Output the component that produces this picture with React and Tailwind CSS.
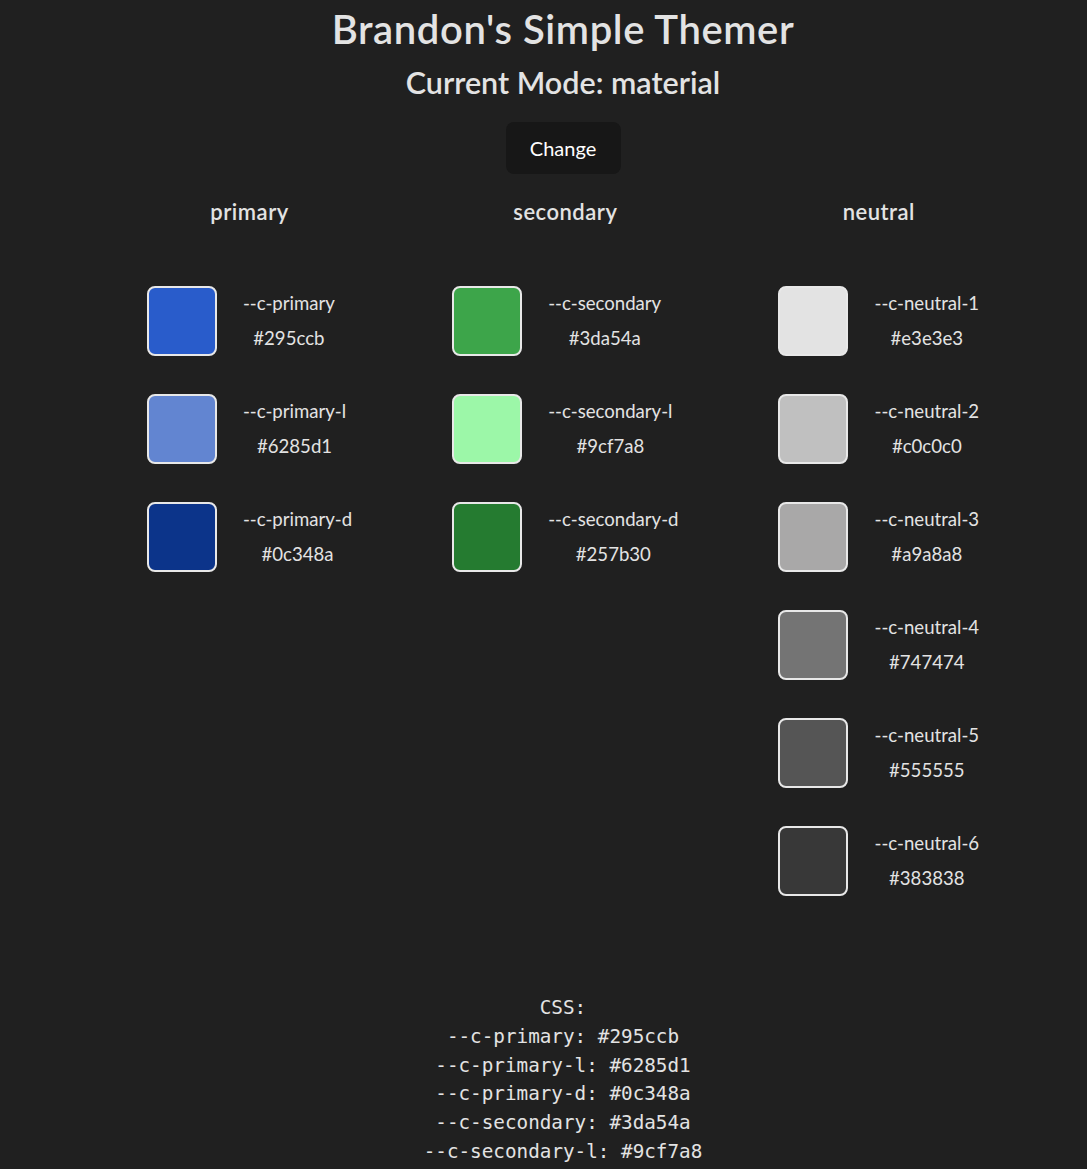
import { useState } from 'react';

const palettes = {
  material: {
    primary: [
      ['--c-primary', '#295ccb'],
      ['--c-primary-l', '#6285d1'],
      ['--c-primary-d', '#0c348a'],
    ],
    secondary: [
      ['--c-secondary', '#3da54a'],
      ['--c-secondary-l', '#9cf7a8'],
      ['--c-secondary-d', '#257b30'],
    ],
    neutral: [
      ['--c-neutral-1', '#e3e3e3'],
      ['--c-neutral-2', '#c0c0c0'],
      ['--c-neutral-3', '#a9a8a8'],
      ['--c-neutral-4', '#747474'],
      ['--c-neutral-5', '#555555'],
      ['--c-neutral-6', '#383838'],
    ],
  },
};

const Swatch = ({ name, hex }) => (
  <div className="flex items-center gap-[26px]">
    <div
      className="w-[70px] h-[70px] rounded-lg border-2 border-[#e8e8e8] shrink-0"
      style={{ backgroundColor: hex }}
    />
    <div className="flex flex-col items-center text-[18.6px] leading-[35px] text-[#e3e3e3]">
      <span>{name}</span>
      <span>{hex}</span>
    </div>
  </div>
);

const App = () => {
  const [mode, setMode] = useState('material');
  const groups = palettes[mode];
  const all = Object.values(groups).flat();

  return (
    <div
      className="min-h-screen bg-[#202020] text-[#e3e3e3] pl-[39px]"
      style={{ fontFamily: 'Lato, "Noto Sans", sans-serif' }}
    >
      <div className="flex flex-col items-center">
        <h1 className="text-[40px] font-semibold leading-[58px] tracking-[0.6px]">Brandon's Simple Themer</h1>
        <h2 className="text-[30.5px] font-semibold leading-[48px]">Current Mode: {mode}</h2>
        <button
          onClick={() => setMode('material')}
          className="mt-[16px] w-[115px] h-[52px] rounded-lg bg-[#171717] text-[20px] text-white"
        >
          Change
        </button>

        <div className="flex gap-[100px] mt-[24px]">
          {Object.entries(groups).map(([group, colors]) => (
            <div key={group} className="flex flex-col items-center">
              <h3 className="text-[22px] font-semibold leading-[28px] tracking-[0.5px] mb-[60px]">{group}</h3>
              <div className="flex flex-col gap-[38px] items-start">
                {colors.map(([name, hex]) => (
                  <Swatch key={name} name={name} hex={hex} />
                ))}
              </div>
            </div>
          ))}
        </div>

        <div
          className="mt-[98px] pb-10 flex flex-col items-center text-[19.3px] leading-[28.8px] text-[#e3e3e3]"
          style={{ fontFamily: '"DejaVu Sans Mono", monospace' }}
        >
          <span>CSS:</span>
          {all.map(([name, hex]) => (
            <span key={name}>{name}: {hex}</span>
          ))}
        </div>
      </div>
    </div>
  );
};

export default App;
